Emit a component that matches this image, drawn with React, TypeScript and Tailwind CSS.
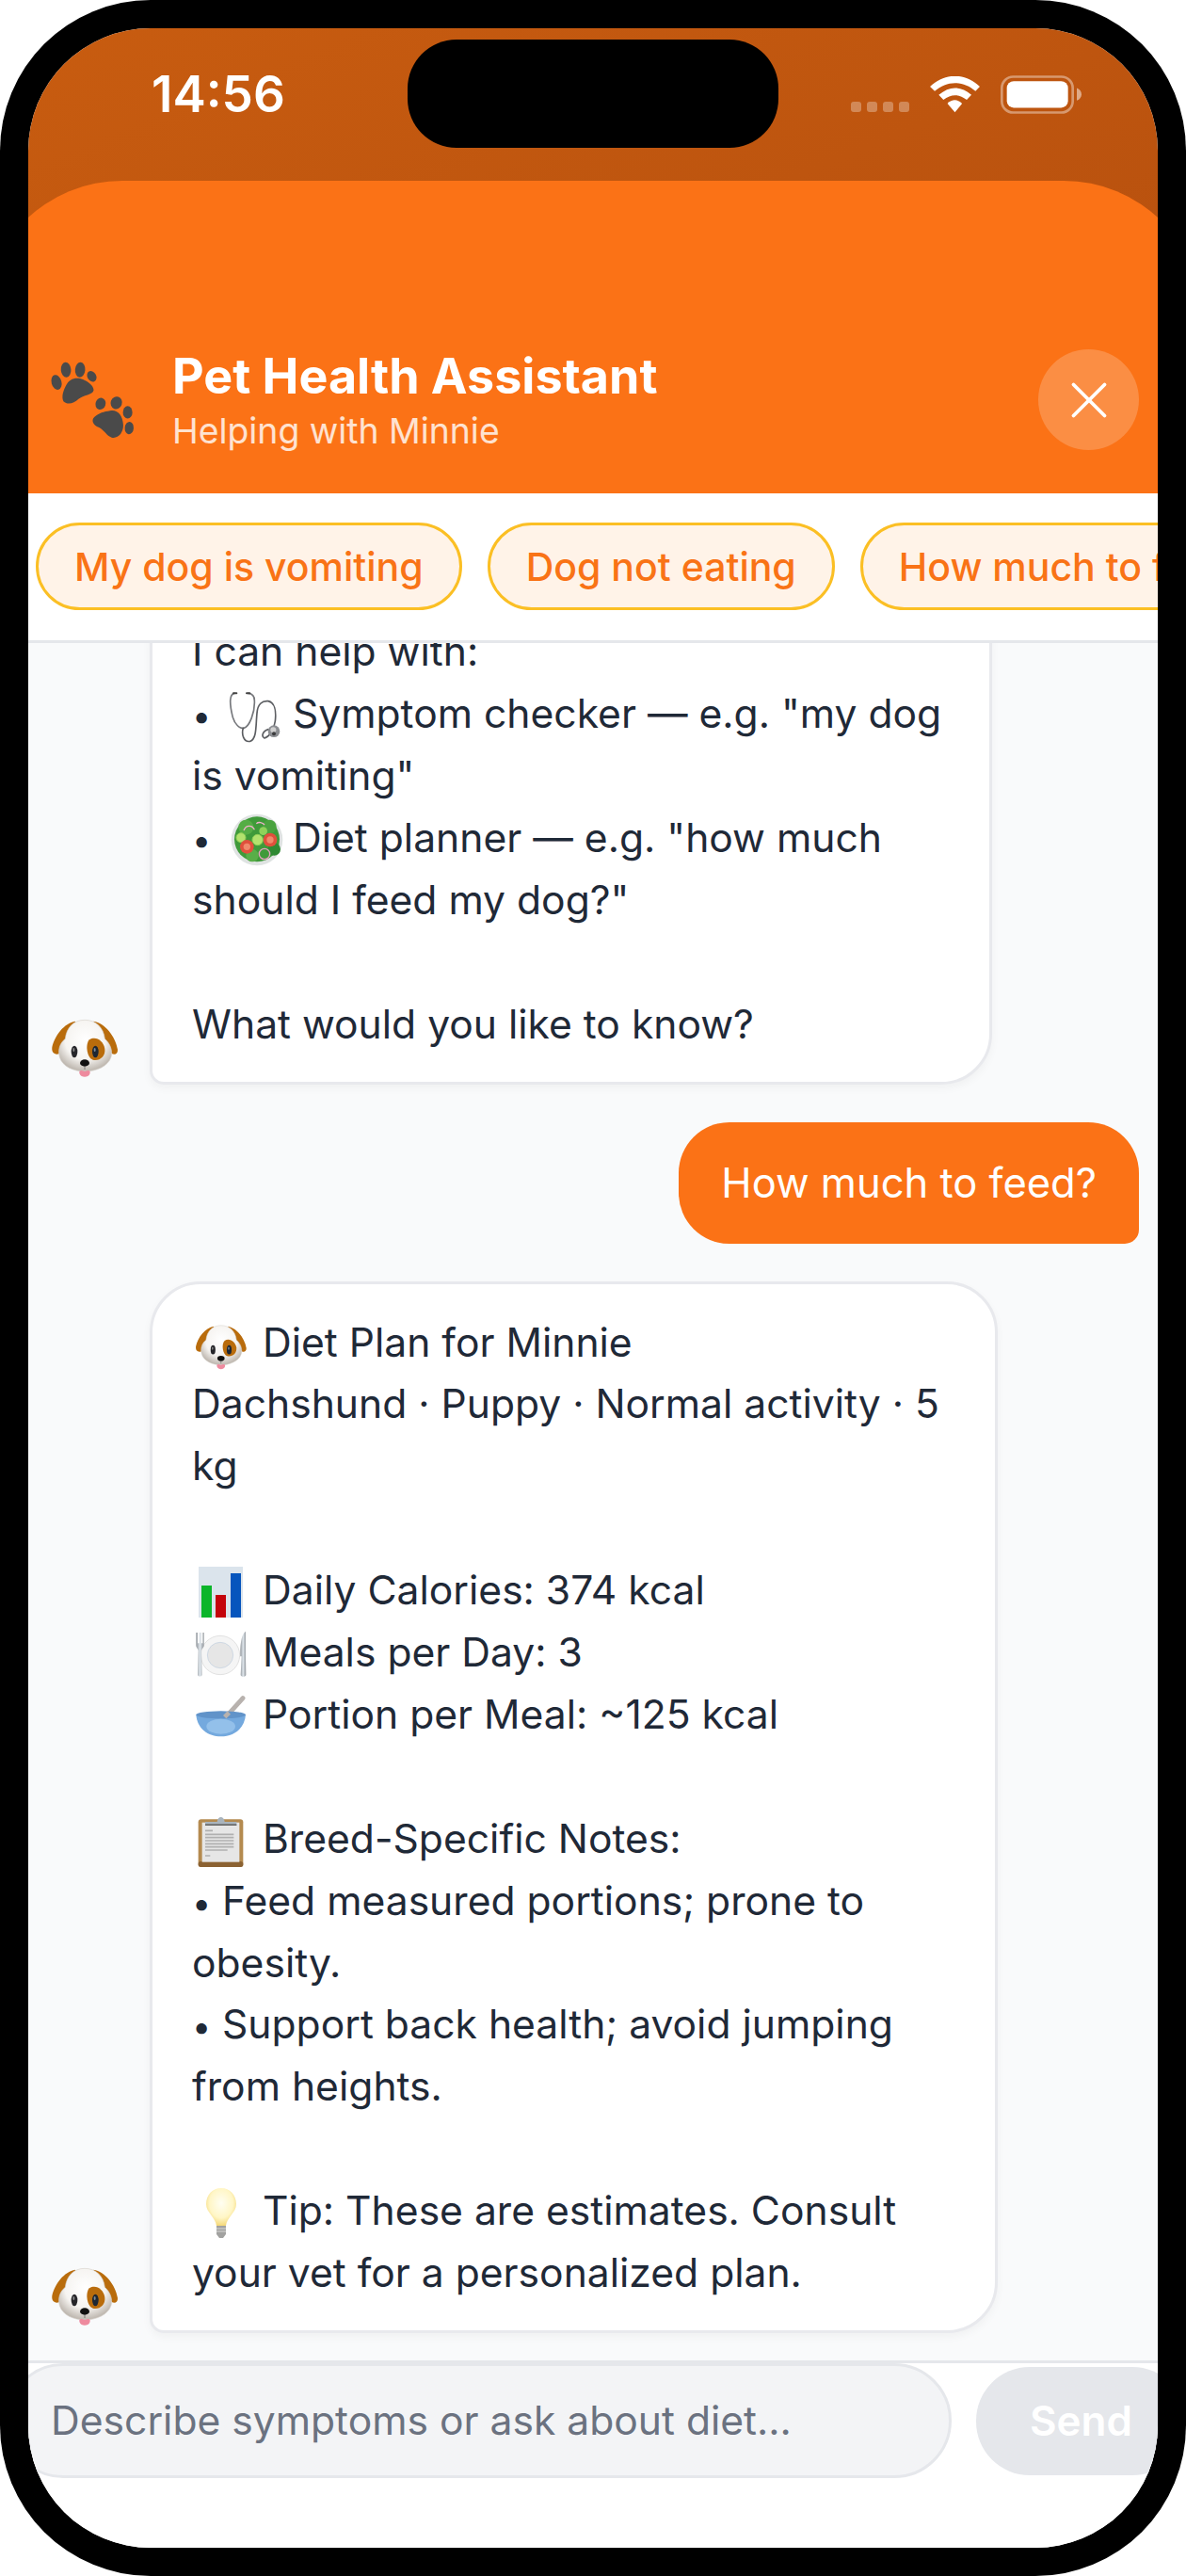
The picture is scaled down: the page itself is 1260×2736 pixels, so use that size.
import { X } from "lucide-react";

const emojiClass = "inline-block w-[60px] h-[60px] align-[-7px] -my-[10px] mr-[3px] overflow-visible";

const DogFace = ({ id }: { id: string }) => (
  <>
    <defs>
      <radialGradient id={id} cx="50%" cy="38%" r="62%">
        <stop offset="0%" stopColor="#ffffff" />
        <stop offset="62%" stopColor="#f6f4f1" />
        <stop offset="100%" stopColor="#bdb6ae" />
      </radialGradient>
    </defs>
    <path d="M150 72C114 78 84 118 76 155C74 172 84 180 98 176C112 150 126 128 140 108C148 96 154 84 150 72Z" fill="#b96c0c" />
    <path d="M208 72C245 78 278 120 285 162C286 176 276 180 266 175C256 150 242 128 228 108C218 96 210 84 208 72Z" fill="#b96c0c" />
    <path d="M180 68C145 68 122 92 118 128C100 142 94 165 100 186C108 216 145 232 180 232C215 232 255 216 264 186C270 165 260 142 244 128C240 92 215 68 180 68Z" fill={`url(#${id})`} stroke="#d8d3cd" strokeWidth="2" />
    <path d="M195 131C215 118 240 134 244 160C247 185 226 200 206 195C188 190 180 146 195 131Z" fill="#b96c0c" />
    <ellipse cx="147" cy="169" rx="10" ry="19" fill="#26262a" />
    <ellipse cx="214" cy="169" rx="10" ry="19" fill="#1d2733" />
    <ellipse cx="145" cy="163" rx="3" ry="6" fill="#8a8a8a" />
    <ellipse cx="212" cy="163" rx="3" ry="6" fill="#7a8a9a" />
    <path d="M180 232C166 226 160 230 164 240C168 252 192 252 196 240C200 230 194 226 180 232Z" fill="#ee8a9e" />
    <ellipse cx="180" cy="205" rx="15" ry="11" fill="#111111" />
    <path d="M180 214V226" stroke="#555" strokeWidth="2" />
  </>
);

const DogEmoji = () => (
  <svg viewBox="60 30 234 234" className={emojiClass}>
    <DogFace id="dogInline" />
  </svg>
);

const Avatar = ({ id }: { id: string }) => (
  <svg viewBox="60 40 240 240" className="w-[80px] h-[80px] shrink-0 -ml-[4px]">
    <DogFace id={id} />
  </svg>
);

const Stethoscope = () => (
  <svg viewBox="157 50 180 180" className={emojiClass}>
    <g fill="none" strokeLinecap="round">
      <path d="M196 69C180 72 180 100 190 142C197 170 214 182 226 180C244 176 262 130 260 92C260 78 252 70 240 69" stroke="#76787c" strokeWidth="5" />
      <path d="M224 180C218 200 226 226 246 222C268 216 264 170 268 132C270 104 284 92 304 94C324 98 330 125 326 158C322 188 306 208 292 212C282 208 284 190 304 184" stroke="#5c5e62" strokeWidth="5" />
    </g>
    <circle cx="322" cy="190" r="19" fill="#8c8e92" />
    <circle cx="320" cy="186" r="9" fill="#d0d0d0" />
    <circle cx="322" cy="198" r="6" fill="#3c3c3e" />
    <rect x="190" y="66" width="16" height="6" rx="3" fill="#444" />
    <rect x="232" y="66" width="16" height="6" rx="3" fill="#444" />
  </svg>
);

const Salad = () => (
  <svg viewBox="149 450 180 180" className={emojiClass}>
    <circle cx="260" cy="540" r="82" fill="#dfe3e2" />
    <circle cx="260" cy="538" r="72" fill="#3f9a3a" />
    <circle cx="225" cy="500" r="24" fill="#55ad45" />
    <circle cx="300" cy="498" r="22" fill="#4aa33f" />
    <circle cx="315" cy="570" r="20" fill="#2f8a33" />
    <circle cx="245" cy="590" r="20" fill="#58ae48" />
    <circle cx="209" cy="533" r="15" fill="#b3e26e" stroke="#8fcf55" strokeWidth="3" />
    <circle cx="262" cy="540" r="17" fill="#b3e26e" stroke="#8fcf55" strokeWidth="3" />
    <circle cx="280" cy="512" r="13" fill="#8fd25a" />
    <circle cx="228" cy="562" r="22" fill="#e0503c" />
    <circle cx="228" cy="562" r="11" fill="#f08a6c" />
    <circle cx="302" cy="540" r="22" fill="#e0503c" />
    <circle cx="302" cy="540" r="11" fill="#f08a6c" />
    <circle cx="284" cy="585" r="17" fill="none" stroke="#e4a0c0" strokeWidth="4" />
    <path d="M218 510C225 492 245 492 252 508" fill="none" stroke="#f0b0cc" strokeWidth="4" />
    <path d="M258 488C265 482 278 484 284 492" fill="none" stroke="#f0b0cc" strokeWidth="4" />
  </svg>
);

const ChartEmoji = () => (
  <svg viewBox="0 0 60 60" className={emojiClass}>
    <rect x="7" y="3" width="47" height="54" fill="#dbe4ec" />
    <rect x="10" y="23" width="11" height="34" fill="#0bb52a" />
    <rect x="25" y="33" width="11" height="24" fill="#c4040c" />
    <rect x="41" y="10" width="11" height="47" fill="#0655bd" />
  </svg>
);

const Plate = () => (
  <svg viewBox="42 135 180 180" className={emojiClass}>
    <defs>
      <linearGradient id="cutlery" x1="0" x2="1">
        <stop offset="0%" stopColor="#8f9499" />
        <stop offset="50%" stopColor="#dfe6ec" />
        <stop offset="100%" stopColor="#8f9499" />
      </linearGradient>
    </defs>
    <circle cx="132" cy="228" r="62" fill="#f5f5f5" stroke="#d5d5d5" strokeWidth="2" />
    <circle cx="132" cy="228" r="41" fill="#e6e6e6" stroke="#bfcfe0" strokeWidth="2" />
    <path d="M55 156V196C55 206 62 208 62 214L60 290C60 297 74 297 74 290L72 214C72 208 80 206 80 196V156H76V190H71V156H65V190H60V156Z" fill="url(#cutlery)" />
    <path d="M213 152C200 160 195 190 196 232H200L197 290C197 298 214 298 214 290L213 232Z" fill="url(#cutlery)" />
  </svg>
);

const Bowl = () => (
  <svg viewBox="42 336 180 180" className={emojiClass}>
    <path d="M148 430L204 368" stroke="#b8b2ae" strokeWidth="15" strokeLinecap="round" />
    <path d="M55 420C58 465 93 490 134 490C175 490 210 465 213 420Z" fill="#74a9de" />
    <ellipse cx="134" cy="421" rx="79" ry="12" fill="#6193c9" />
    <path d="M146 428L160 414" stroke="#b8b2ae" strokeWidth="14" />
    <ellipse cx="134" cy="458" rx="46" ry="24" fill="#93c0ea" />
  </svg>
);

const Clipboard = () => (
  <svg viewBox="42 36 180 180" className={emojiClass}>
    <rect x="62" y="58" width="143" height="152" rx="9" fill="#b48a4f" />
    <rect x="62" y="192" width="143" height="18" rx="8" fill="#8b6232" />
    <rect x="74" y="68" width="119" height="126" fill="#e6e6e6" />
    <path d="M84 94H108M84 106H175M84 116H175M84 126H175M84 136H175M84 146H175M84 156H155M84 174H100" stroke="#b0b0b0" strokeWidth="5" />
    <path d="M84 78V66H122C124 46 144 46 146 66H184V78Z" fill="#a9b4bd" />
    <rect x="84" y="73" width="100" height="5" fill="#676767" />
  </svg>
);

const Bulb = () => (
  <svg viewBox="0 0 60 60" className={emojiClass}>
    <defs>
      <radialGradient id="bulbGlow" cx="50%" cy="40%" r="60%">
        <stop offset="0%" stopColor="#fffef2" />
        <stop offset="65%" stopColor="#fff6c6" />
        <stop offset="100%" stopColor="#f5d878" />
      </radialGradient>
    </defs>
    <path d="M31 4C22 4 15 11 15 21C15 30 25 35 26 44H36C37 35 47 30 47 21C47 11 40 4 31 4Z" fill="url(#bulbGlow)" />
    <path d="M26 44H36V53L33 57H29L26 53Z" fill="#a2a2a0" />
    <path d="M26 47H36M26 50H36" stroke="#d8d8d6" strokeWidth="1.2" />
  </svg>
);

const Paws = () => (
  <svg viewBox="60 90 290 260" className="w-[97px] h-[87px] shrink-0" fill="#4a4a4a">
    <ellipse cx="90" cy="165" rx="16" ry="24" transform="rotate(-15 90 165)" />
    <ellipse cx="120" cy="125" rx="16" ry="24" transform="rotate(-5 120 125)" />
    <ellipse cx="165" cy="125" rx="16" ry="24" transform="rotate(5 165 125)" />
    <ellipse cx="202" cy="146" rx="14" ry="18" transform="rotate(-30 202 146)" />
    <path d="M155 152C180 152 210 175 208 190C205 205 175 205 160 218C145 232 125 238 112 225C105 210 112 190 120 175C128 160 140 152 155 152Z" />
    <ellipse cx="230" cy="233" rx="16" ry="19" transform="rotate(20 230 233)" />
    <ellipse cx="280" cy="230" rx="18" ry="20" transform="rotate(20 280 230)" />
    <ellipse cx="316" cy="260" rx="15" ry="20" />
    <ellipse cx="321" cy="310" rx="14" ry="20" transform="rotate(5 321 310)" />
    <path d="M260 255C285 250 300 270 302 300C303 325 285 345 265 340C250 335 240 315 225 308C205 300 200 285 210 275C225 262 240 258 260 255Z" />
  </svg>
);

const Bullet = () => <span className="inline-block w-[20px] text-center text-[36px] leading-none">•</span>;

const StatusBar = () => (
  <div className="relative h-[162px] shrink-0 flex justify-between items-start pt-[50px] pl-[131px] pr-[81px]">
    <span className="text-[53px] leading-[41px] font-semibold text-white">14:56</span>
    <div className="absolute left-[403px] top-[12px] w-[394px] h-[115px] rounded-[52px] bg-black" />
    <div className="flex items-center gap-[22px]">
      <div className="flex gap-[6px] self-end mb-[2px]">
        <div className="w-[11px] h-[11px] rounded-[3px] bg-white/30" />
        <div className="w-[11px] h-[11px] rounded-[3px] bg-white/30" />
        <div className="w-[11px] h-[11px] rounded-[3px] bg-white/30" />
        <div className="w-[11px] h-[11px] rounded-[3px] bg-white/30" />
      </div>
      <svg viewBox="322 62 160 118" className="w-[53px] h-[39px]" fill="#fff">
        <path d="M322 95C370 50 435 50 482 95L468 110C430 75 375 75 337 110Z" />
        <path d="M350 122C385 92 420 92 455 122L440 138C415 118 390 118 365 138Z" />
        <path d="M378 150C392 135 412 135 425 150L402 178Z" />
      </svg>
      <svg viewBox="550 60 258 122" className="w-[86px] h-[41px]">
        <rect x="554" y="64" width="226" height="114" rx="36" fill="none" stroke="#fff" strokeOpacity="0.4" strokeWidth="8" />
        <rect x="570" y="78" width="195" height="85" rx="22" fill="#fff" />
        <path d="M793 100C803 104 808 112 808 120C808 128 803 136 793 140Z" fill="#fff" fillOpacity="0.5" />
      </svg>
    </div>
  </div>
);

const chips = ["My dog is vomiting", "Dog not eating", "How much to feed?"];

const BotMessage = ({ id, width, children }: { id: string; width: string; children: React.ReactNode }) => (
  <div className="flex items-end gap-[29px]">
    <div className="mb-[-2px]">
      <Avatar id={id} />
    </div>
    <div className={`${width} shrink-0 bg-white border-[3px] border-[#e8e9ed] rounded-[54px] rounded-bl-[15px] px-[42px] pt-[29px] pb-[28px] text-[#1f2937] text-[42.6px] leading-[65.9px] shadow-[0_4px_10px_rgba(0,0,0,0.04)]`}>
      {children}
    </div>
  </div>
);

export default function App() {
  return (
    <div className="w-[1260px] h-[2736px] bg-white font-['Inter',sans-serif]">
      <div className="w-full h-full bg-black rounded-[160px] p-[30px]">
        <div className="w-full h-full rounded-[130px] overflow-hidden flex flex-col bg-white">
          <div className="shrink-0 overflow-hidden bg-gradient-to-br from-[#c85c10] to-[#b44e0e]">
            <StatusBar />
            <div className="-mx-[48px] h-[332px] rounded-t-[148px] bg-[#fb7216] flex items-end pb-[46px] pl-[68px] pr-[68px]">
              <div className="flex items-center w-full h-[107px]">
                <Paws />
                <div className="ml-[36px] flex-1 mb-[3px]">
                  <div className="text-[52px] leading-[68px] font-bold text-white">Pet Health Assistant</div>
                  <div className="text-[37.3px] leading-[47px] text-white/80">Helping with Minnie</div>
                </div>
                <button className="w-[107px] h-[107px] rounded-full bg-white/20 flex items-center justify-center text-white">
                  <X size={66} strokeWidth={1.4} />
                </button>
              </div>
            </div>
          </div>

          <div className="h-[159px] shrink-0 flex gap-[27px] pl-[8px] pt-[31px] bg-white border-b-[3px] border-[#e5e7eb] overflow-hidden">
            {chips.map((c) => (
              <div key={c} className="h-[93px] shrink-0 flex items-center pt-[2px] px-[38px] rounded-full border-[3px] border-[#fbbf24] bg-[#fff3e8] text-[#f97316] text-[41px] font-medium whitespace-nowrap">
                {c}
              </div>
            ))}
          </div>

          <div className="flex-1 min-h-0 overflow-hidden bg-[#f9fafb] flex flex-col justify-end gap-[40px] pl-[24px] pr-[20px] pb-[29px]">
            <BotMessage id="dogA" width="w-[895px]">
              <div>I can help with:</div>
              <div><Bullet /> <Stethoscope /> Symptom checker — e.g. "my dog is vomiting"</div>
              <div><Bullet /> <Salad /> Diet planner — e.g. "how much should I feed my dog?"</div>
              <br />
              <div>What would you like to know?</div>
            </BotMessage>

            <div className="self-end rounded-[54px] rounded-br-[15px] bg-[#fb7216] text-white text-[43.5px] leading-[65px] px-[45px] py-[32px] whitespace-nowrap">
              How much to feed?
            </div>

            <BotMessage id="dogB" width="w-[901px]">
              <div><DogEmoji /> Diet Plan for Minnie</div>
              <div>Dachshund · Puppy · Normal activity · 5 kg</div>
              <br />
              <div><ChartEmoji /> Daily Calories: 374 kcal</div>
              <div><Plate /> Meals per Day: 3</div>
              <div><Bowl /> Portion per Meal: ~125 kcal</div>
              <br />
              <div><Clipboard /> Breed-Specific Notes:</div>
              <div><Bullet /> Feed measured portions; prone to obesity.</div>
              <div><Bullet /> Support back health; avoid jumping from heights.</div>
              <br />
              <div><Bulb /> Tip: These are estimates. Consult your vet for a personalized plan.</div>
            </BotMessage>
          </div>

          <div className="h-[199px] shrink-0 bg-white border-t-[3px] border-[#e5e7eb]">
            <div className="flex items-center gap-[26px] -ml-[24px] w-[1260px]">
              <div className="w-[1005px] h-[122px] shrink-0 rounded-full bg-[#f3f4f6] border-[3px] border-[#e5e7eb] flex items-center pl-[45px] text-[42.6px] text-[#6b7280]">
                Describe symptoms or ask about diet...
              </div>
              <button className="w-[223px] h-[115px] shrink-0 rounded-[57px] bg-[#e5e7eb] text-white text-[44px] font-semibold">
                Send
              </button>
            </div>
          </div>
        </div>
      </div>
    </div>
  );
}
